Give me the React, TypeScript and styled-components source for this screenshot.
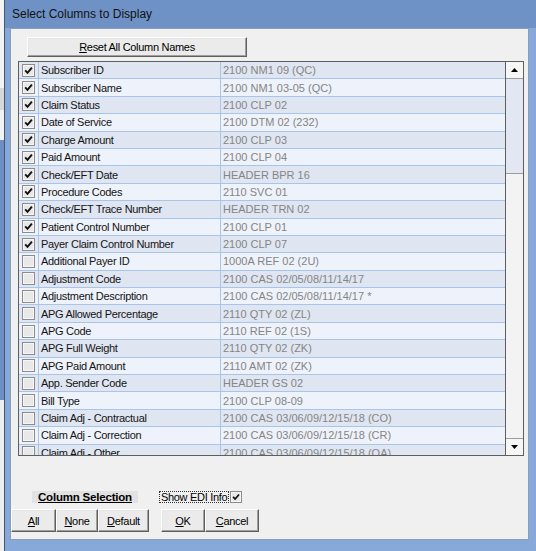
import React from "react";
import styled, { createGlobalStyle } from "styled-components";

type Column = {
  name: string;
  code: string;
  shown: boolean;
};

const columns: Column[] = [
  { name: "Subscriber ID", code: "2100 NM1 09 (QC)", shown: true },
  { name: "Subscriber Name", code: "2100 NM1 03-05 (QC)", shown: true },
  { name: "Claim Status", code: "2100 CLP 02", shown: true },
  { name: "Date of Service", code: "2100 DTM 02 (232)", shown: true },
  { name: "Charge Amount", code: "2100 CLP 03", shown: true },
  { name: "Paid Amount", code: "2100 CLP 04", shown: true },
  { name: "Check/EFT Date", code: "HEADER BPR 16", shown: true },
  { name: "Procedure Codes", code: "2110 SVC 01", shown: true },
  { name: "Check/EFT Trace Number", code: "HEADER TRN 02", shown: true },
  { name: "Patient Control Number", code: "2100 CLP 01", shown: true },
  { name: "Payer Claim Control Number", code: "2100 CLP 07", shown: true },
  { name: "Additional Payer ID", code: "1000A REF 02 (2U)", shown: false },
  { name: "Adjustment Code", code: "2100 CAS 02/05/08/11/14/17", shown: false },
  { name: "Adjustment Description", code: "2100 CAS 02/05/08/11/14/17 *", shown: false },
  { name: "APG Allowed Percentage", code: "2110 QTY 02 (ZL)", shown: false },
  { name: "APG Code", code: "2110 REF 02 (1S)", shown: false },
  { name: "APG Full Weight", code: "2110 QTY 02 (ZK)", shown: false },
  { name: "APG Paid Amount", code: "2110 AMT 02 (ZK)", shown: false },
  { name: "App. Sender Code", code: "HEADER GS 02", shown: false },
  { name: "Bill Type", code: "2100 CLP 08-09", shown: false },
  { name: "Claim Adj - Contractual", code: "2100 CAS 03/06/09/12/15/18 (CO)", shown: false },
  { name: "Claim Adj - Correction", code: "2100 CAS 03/06/09/12/15/18 (CR)", shown: false },
  { name: "Claim Adj - Other", code: "2100 CAS 03/06/09/12/15/18 (OA)", shown: false },
];

const GlobalStyle = createGlobalStyle`
  html, body {
    margin: 0;
    padding: 0;
    background: #eef0f3;
    font-family: "Liberation Sans", Arial, sans-serif;
  }
`;

const Screen = styled.div`
  width: 536px;
  height: 551px;
  display: flex;
  overflow: hidden;
`;

const Backdrop = styled.div`
  width: 4px;
  flex-shrink: 0;
  background: linear-gradient(to bottom, #f4f4f4 0px, #f4f4f4 88px, #d8d8d8 88px, #d8d8d8 110px, #f2f2f2 110px, #f2f2f2 140px, #6d8fc4 140px, #6d8fc4 400px, #eeeeee 400px);
`;

const DialogWindow = styled.div`
  flex: 1;
  min-width: 0;
  display: flex;
  flex-direction: column;
  border-left: 1px solid #44566f;
  background: #7fa3d6;
`;

const Caption = styled.div`
  height: 28px;
  flex-shrink: 0;
  display: flex;
  align-items: center;
  padding-left: 7px;
  background: #6f92c6;
`;

const Title = styled.span`
  font-size: 12px;
  color: #111;
`;

const FrameBody = styled.div`
  flex: 1;
  min-height: 0;
  display: flex;
  flex-direction: column;
  padding: 0 7px 11px 5px;
  background: #86a9d9;
`;

const Client = styled.div`
  flex: 1;
  display: flex;
  flex-direction: column;
  background: #f0f0f0;
  border: 1px solid #8d9db4;
  font-size: 11px;
  color: #000;
`;

const Hotkey = styled.span`
  text-decoration: underline;
`;

const Button = styled.button<{ $w: number; $h: number }>`
  width: ${(p) => p.$w}px;
  height: ${(p) => p.$h}px;
  padding: 0;
  font-family: "Liberation Sans", Arial, sans-serif;
  font-size: 11px;
  letter-spacing: -0.3px;
  color: #000;
  background: #ebebeb;
  border: 1px solid;
  border-color: #ffffff #5f5f5f #5f5f5f #ffffff;
  box-shadow: inset -1px -1px #a0a0a0, inset 1px 1px #e6e6e6;
  border-radius: 0;
`;

const ResetRow = styled.div`
  padding: 8px 0 0 16px;
`;

const Grid = styled.div`
  margin: 4px 0 0 7px;
  width: 504px;
  height: 393px;
  border: 1px solid #5e5e5e;
  display: flex;
  background: #eef2fa;
`;

const RowList = styled.div`
  flex: 1;
  overflow: hidden;
`;

const Row = styled.div<{ $alt: boolean }>`
  display: grid;
  grid-template-columns: 20px 182px 1fr;
  height: 17.4px;
  box-sizing: border-box;
  border-bottom: 1px solid #a8c5e9;
  background: ${(p) => (p.$alt ? "#eef2fa" : "#dfe5f1")};
`;

const Cell = styled.div`
  display: flex;
  align-items: center;
  border-right: 1px solid #a8c5e9;
  overflow: hidden;
  white-space: nowrap;
`;

const CheckCell = styled(Cell)`
  justify-content: center;
`;

const NameCell = styled(Cell)`
  padding-left: 2px;
  color: #141414;
  letter-spacing: -0.3px;
`;

const CodeCell = styled(Cell)`
  padding-left: 2px;
  color: #858585;
  border-right: none;
`;

const Box = styled.span<{ $size: number }>`
  width: ${(p) => p.$size}px;
  height: ${(p) => p.$size}px;
  box-sizing: border-box;
  flex-shrink: 0;
  display: flex;
  align-items: center;
  justify-content: center;
  border: 1px solid #8c8c8c;
  background: #e8e8e8;
  box-shadow: inset 0 0 0 1px #f6f6f6;
`;

const CheckBox = ({ checked, size = 13 }: { checked: boolean; size?: number }) => (
  <Box $size={size}>
    {checked && (
      <svg width={size - 4} height={size - 4} viewBox="0 0 9 9">
        <path d="M1.2 4.4 L3.5 6.8 L7.9 1.6" fill="none" stroke="#111" strokeWidth="1.9" />
      </svg>
    )}
  </Box>
);

const ScrollBar = styled.div`
  width: 17px;
  border-left: 1px solid #5e5e5e;
  display: flex;
  flex-direction: column;
  background: #f3f3f3;
`;

const ScrollButton = styled.div<{ $down?: boolean }>`
  height: 17px;
  box-sizing: border-box;
  display: flex;
  align-items: center;
  justify-content: center;
  background: #f6f6f6;
  border-top: ${(p) => (p.$down ? "1px solid #9c9c9c" : "none")};
  border-bottom: ${(p) => (p.$down ? "none" : "1px solid #9c9c9c")};
`;

const Thumb = styled.div`
  height: 95px;
  box-sizing: border-box;
  background: #e3e7f3;
  border-bottom: 1px solid #9c9c9c;
`;

const Track = styled.div`
  flex: 1;
`;

const Arrow = ({ down }: { down?: boolean }) => (
  <svg width="7" height="4" viewBox="0 0 7 4">
    <path d={down ? "M0 0 H7 L3.5 4 Z" : "M0 4 H7 L3.5 0 Z"} fill="#000" />
  </svg>
);

const Footer = styled.div`
  margin-top: auto;
  padding-bottom: 7px;
  display: flex;
  flex-direction: column;
  gap: 6px;
`;

const SelectionLine = styled.div`
  display: flex;
  align-items: center;
  padding-left: 21px;
`;

const SectionLabel = styled.span`
  background: #e2e2e2;
  padding: 0 6px;
  height: 12px;
  line-height: 12px;
  font-weight: bold;
  font-size: 11.5px;
  letter-spacing: -0.2px;
  text-decoration: underline;
`;

const EdiLabel = styled.span`
  margin-left: 21px;
  border: 1px dotted #333;
  height: 10px;
  line-height: 10px;
  padding: 0 1px;
  letter-spacing: -0.3px;
`;

const EdiCheck = styled.span`
  margin-left: 1px;
  display: flex;
`;

const ButtonRow = styled.div`
  display: flex;
  gap: 12px;
`;

const ButtonGroup = styled.div`
  display: flex;
`;

export default function App() {
  return (
    <>
      <GlobalStyle />
      <Screen>
        <Backdrop />
        <DialogWindow>
          <Caption>
            <Title>Select Columns to Display</Title>
          </Caption>
          <FrameBody>
            <Client>
              <ResetRow>
                <Button $w={220} $h={20}>
                  <Hotkey>R</Hotkey>eset All Column Names
                </Button>
              </ResetRow>
              <Grid>
                <RowList>
                  {columns.map((c, i) => (
                    <Row key={c.name} $alt={i % 2 === 1}>
                      <CheckCell>
                        <CheckBox checked={c.shown} />
                      </CheckCell>
                      <NameCell>{c.name}</NameCell>
                      <CodeCell>{c.code}</CodeCell>
                    </Row>
                  ))}
                </RowList>
                <ScrollBar>
                  <ScrollButton>
                    <Arrow />
                  </ScrollButton>
                  <Thumb />
                  <Track />
                  <ScrollButton $down>
                    <Arrow down />
                  </ScrollButton>
                </ScrollBar>
              </Grid>
              <Footer>
                <SelectionLine>
                  <SectionLabel>Column Selection</SectionLabel>
                  <EdiLabel>Show EDI Info</EdiLabel>
                  <EdiCheck>
                    <CheckBox checked size={12} />
                  </EdiCheck>
                </SelectionLine>
                <ButtonRow>
                  <ButtonGroup>
                    <Button $w={45} $h={23}>
                      <Hotkey>A</Hotkey>ll
                    </Button>
                    <Button $w={42} $h={23}>
                      <Hotkey>N</Hotkey>one
                    </Button>
                    <Button $w={51} $h={23}>
                      <Hotkey>D</Hotkey>efault
                    </Button>
                  </ButtonGroup>
                  <ButtonGroup>
                    <Button $w={44} $h={23}>
                      <Hotkey>O</Hotkey>K
                    </Button>
                    <Button $w={54} $h={23}>
                      <Hotkey>C</Hotkey>ancel
                    </Button>
                  </ButtonGroup>
                </ButtonRow>
              </Footer>
            </Client>
          </FrameBody>
        </DialogWindow>
      </Screen>
    </>
  );
}
